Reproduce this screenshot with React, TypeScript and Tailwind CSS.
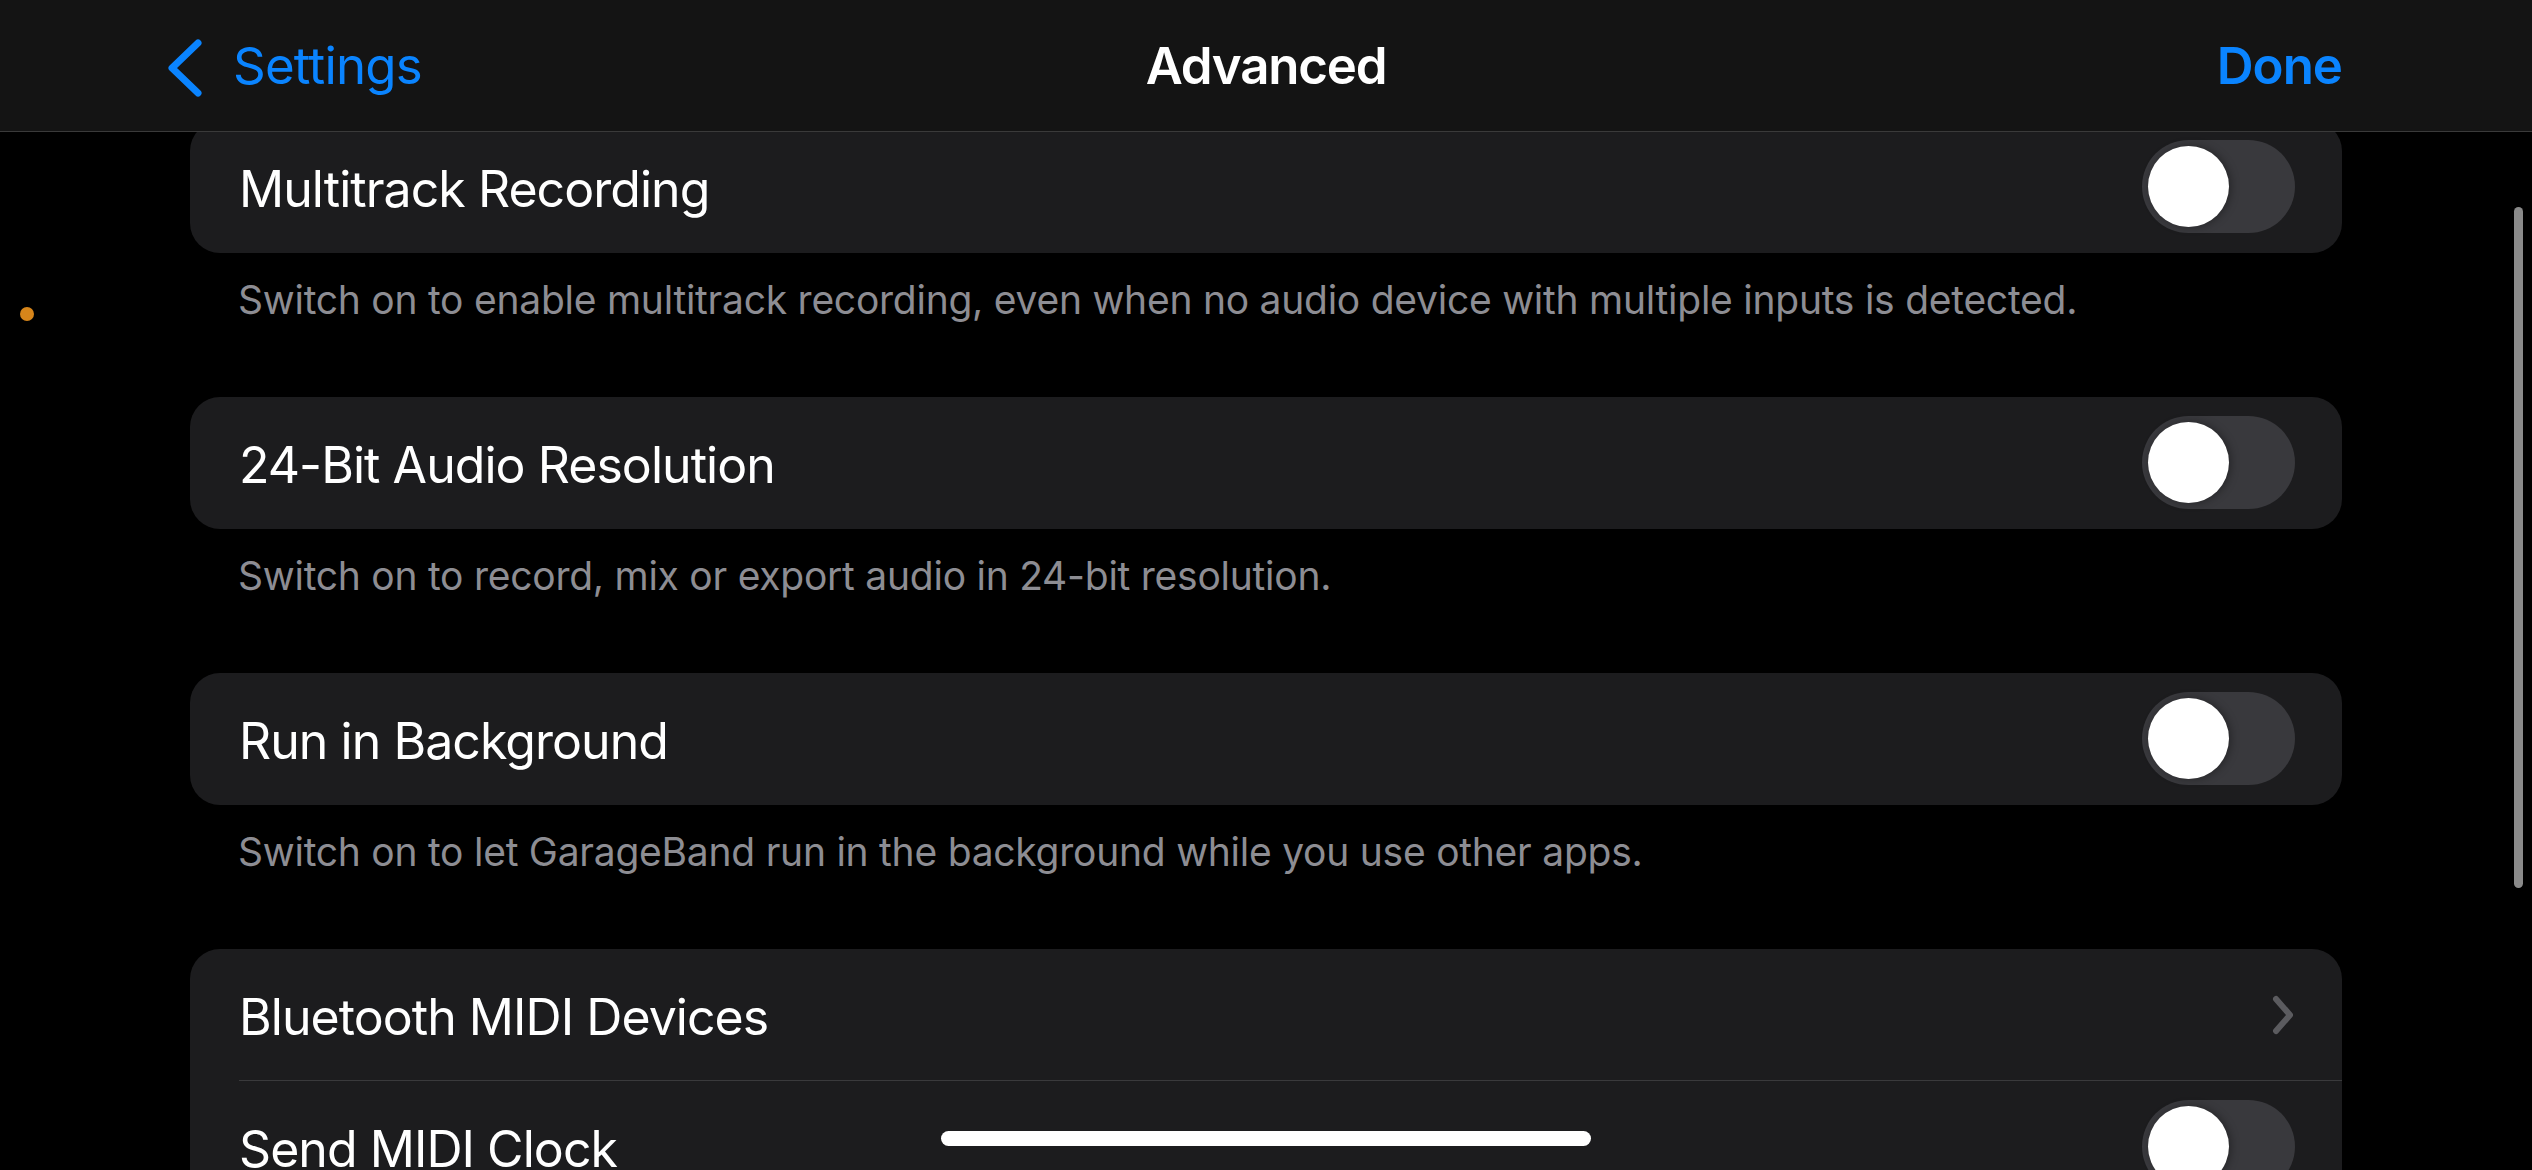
import React from 'react';

// Settings > Advanced (GarageBand) — dark inset grouped list

const Toggle: React.FC<{ on?: boolean }> = ({ on = false }) => (
  <div
    className={`w-[153px] h-[93px] rounded-full p-[6px] flex shrink-0 ${
      on ? 'bg-[#30d158] justify-end' : 'bg-[#39393d] justify-start'
    }`}
  >
    <div className="w-[81px] h-[81px] rounded-full bg-white shadow-[2px_0_8px_rgba(0,0,0,0.35)]" />
  </div>
);

const Chevron = () => (
  <svg width="24" height="40" viewBox="0 0 24 40" className="shrink-0">
    <path
      d="M5 4 L19 20 L5 36"
      fill="none"
      stroke="#5b5b5f"
      strokeWidth="6"
      strokeLinecap="round"
      strokeLinejoin="round"
    />
  </svg>
);

const Row: React.FC<{ label: string; accessory: React.ReactNode; divider?: boolean }> = ({
  label,
  accessory,
  divider,
}) => (
  <div className="flex flex-col">
    <div className="h-[131px] flex items-center justify-between pl-[49px] pr-[47px]">
      <span className="pt-[6px] text-[50px] text-white tracking-[-0.95px]">{label}</span>
      {accessory}
    </div>
    <div className={`h-px ml-[49px] ${divider ? 'bg-[#3a3a3c]' : 'bg-transparent'}`} />
  </div>
);

const Footer: React.FC<{ children: React.ReactNode }> = ({ children }) => (
  <p className="pt-[23px] pb-[73px] pl-[48px] text-[39px] leading-[48px] text-[#8d8d93] tracking-[-0.25px]">
    {children}
  </p>
);

export default function App() {
  return (
    <div
      className="relative w-[2532px] h-[1170px] bg-black overflow-hidden"
      style={{ fontFamily: 'Inter, "Noto Sans", sans-serif' }}
    >
      {/* list content (scrolled, first card runs under the nav bar) */}
      <div className="pt-[121px] px-[190px]">
        <div className="rounded-[30px] bg-[#1c1c1e] overflow-hidden">
          <Row label="Multitrack Recording" accessory={<Toggle />} />
        </div>
        <Footer>
          Switch on to enable multitrack recording, even when no audio device with multiple inputs is detected.
        </Footer>

        <div className="rounded-[30px] bg-[#1c1c1e] overflow-hidden">
          <Row label="24-Bit Audio Resolution" accessory={<Toggle />} />
        </div>
        <Footer>Switch on to record, mix or export audio in 24-bit resolution.</Footer>

        <div className="rounded-[30px] bg-[#1c1c1e] overflow-hidden">
          <Row label="Run in Background" accessory={<Toggle />} />
        </div>
        <Footer>Switch on to let GarageBand run in the background while you use other apps.</Footer>

        <div className="rounded-[30px] bg-[#1c1c1e] overflow-hidden">
          <Row label="Bluetooth MIDI Devices" accessory={<Chevron />} divider />
          <Row label="Send MIDI Clock" accessory={<Toggle />} />
        </div>
      </div>

      {/* nav bar */}
      <div className="absolute top-0 inset-x-0 h-[132px] bg-[#141414] border-b border-[#3a3a3a] grid grid-cols-[1fr_auto_1fr] items-center">
        <div className="flex items-center pl-[165px] gap-[28px] pt-[2px]">
          <svg width="40" height="60" viewBox="0 0 40 60">
            <path
              d="M33 6 L7 31 L33 56"
              fill="none"
              stroke="#0a84ff"
              strokeWidth="7"
              strokeLinecap="round"
              strokeLinejoin="round"
            />
          </svg>
          <span className="text-[51px] text-[#0a84ff] tracking-[-0.8px]">Settings</span>
        </div>
        <span className="pt-[2px] text-[51px] font-semibold text-white tracking-[-1.2px]">Advanced</span>
        <div className="flex justify-end pr-[190px] pt-[2px]">
          <span className="text-[51px] font-semibold text-[#0a84ff] tracking-[-1px]">Done</span>
        </div>
      </div>

      {/* recording indicator */}
      <div className="absolute left-[20px] top-[307px] w-[14px] h-[14px] rounded-full bg-[#d6851a]" />

      {/* scroll indicator */}
      <div className="absolute right-[9px] top-[207px] w-[9px] h-[681px] rounded-full bg-[#8a8a8a]" />

      {/* home indicator */}
      <div className="absolute left-[941px] top-[1131px] w-[650px] h-[15px] rounded-full bg-white" />
    </div>
  );
}
